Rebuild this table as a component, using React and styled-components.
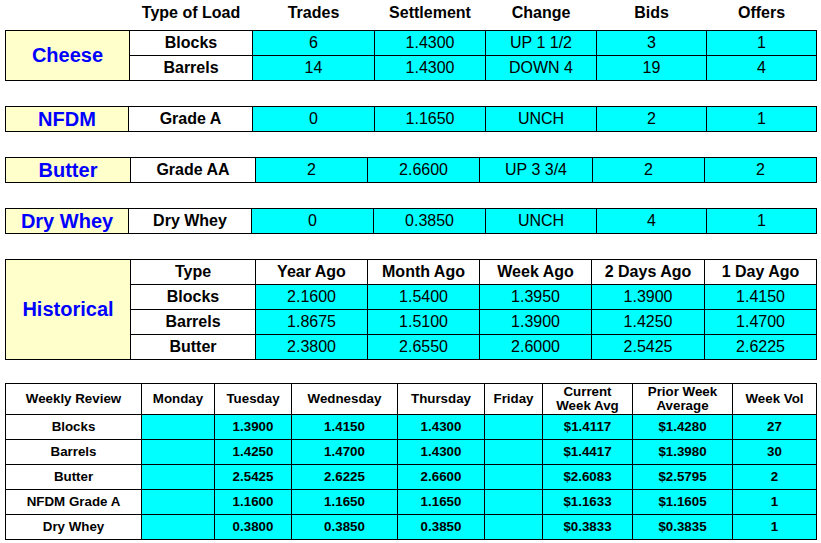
import React from "react";
import styled, { createGlobalStyle } from "styled-components";

const Global = createGlobalStyle`
  html, body { margin: 0; padding: 0; background: #fff; }
  body { font-family: "Liberation Sans", Arial, sans-serif; color: #000; }
`;

const Page = styled.div`
  padding: 0 5px;
  width: 812px;
`;

const Grid = styled.div`
  display: grid;
  grid-template-columns: ${(p) => p.$cols};
  grid-auto-rows: ${(p) => p.$rows || "24px"};
  gap: 1px;
  padding: 1px;
  background: #000;
  margin-top: ${(p) => p.$mt || 0}px;
`;

const HeadGrid = styled.div`
  display: grid;
  grid-template-columns: ${(p) => p.$cols};
  grid-auto-rows: 25px;
  gap: 1px;
  padding: 0 1px;
  margin-bottom: 5px;
`;

const Cell = styled.div`
  display: flex;
  align-items: center;
  justify-content: center;
  text-align: center;
  font-size: 16px;
  font-weight: ${(p) => (p.$bold ? 700 : 400)};
  background: ${(p) => (p.$cyan ? "#00ffff" : "#fff")};
  white-space: nowrap;
`;

const HeadCell = styled.div`
  display: flex;
  align-items: center;
  justify-content: center;
  font-size: 16px;
  font-weight: 700;
`;

const Label = styled.div`
  grid-row: span ${(p) => p.$span || 1};
  display: flex;
  align-items: center;
  justify-content: center;
  background: #ffffcc;
  color: #0000ff;
  font-size: 20px;
  font-weight: 700;
  white-space: nowrap;
`;

const WCell = styled.div`
  display: flex;
  align-items: center;
  justify-content: center;
  text-align: center;
  font-size: 13.33px;
  line-height: 14px;
  font-weight: 700;
  background: ${(p) => (p.$cyan ? "#00ffff" : "#fff")};
  white-space: nowrap;
`;

const cols = (arr) => arr.map((w) => `${w}px`).join(" ");

const CHEESE = cols([123, 122, 121, 110, 110, 109, 109]);
const NFDM = cols([122, 123, 121, 110, 110, 109, 109]);
const BUTTER = cols([124, 124, 111, 111, 112, 111, 111]);
const WHEY = cols([122, 122, 121, 111, 110, 109, 109]);
const HIST = cols([124, 124, 111, 111, 111, 112, 111]);
const WEEK = cols([135, 72, 76, 105, 86, 57, 89, 99, 83]);

function DataRow({ type, values }) {
  return (
    <>
      <Cell $bold>{type}</Cell>
      {values.map((v, i) => (
        <Cell key={i} $cyan>
          {v}
        </Cell>
      ))}
    </>
  );
}

const weekly = [
  ["Blocks", "", "1.3900", "1.4150", "1.4300", "", "$1.4117", "$1.4280", "27"],
  ["Barrels", "", "1.4250", "1.4700", "1.4300", "", "$1.4417", "$1.3980", "30"],
  ["Butter", "", "2.5425", "2.6225", "2.6600", "", "$2.6083", "$2.5795", "2"],
  ["NFDM Grade A", "", "1.1600", "1.1650", "1.1650", "", "$1.1633", "$1.1605", "1"],
  ["Dry Whey", "", "0.3800", "0.3850", "0.3850", "", "$0.3833", "$0.3835", "1"],
];

export default function App() {
  return (
    <Page>
      <Global />
      <HeadGrid $cols={CHEESE}>
        <HeadCell />
        <HeadCell>Type of Load</HeadCell>
        <HeadCell>Trades</HeadCell>
        <HeadCell>Settlement</HeadCell>
        <HeadCell>Change</HeadCell>
        <HeadCell>Bids</HeadCell>
        <HeadCell>Offers</HeadCell>
      </HeadGrid>

      <Grid $cols={CHEESE}>
        <Label $span={2}>Cheese</Label>
        <DataRow type="Blocks" values={["6", "1.4300", "UP 1 1/2", "3", "1"]} />
        <DataRow type="Barrels" values={["14", "1.4300", "DOWN 4", "19", "4"]} />
      </Grid>

      <Grid $cols={NFDM} $mt={25}>
        <Label>NFDM</Label>
        <DataRow type="Grade A" values={["0", "1.1650", "UNCH", "2", "1"]} />
      </Grid>

      <Grid $cols={BUTTER} $mt={25}>
        <Label>Butter</Label>
        <DataRow type="Grade AA" values={["2", "2.6600", "UP 3 3/4", "2", "2"]} />
      </Grid>

      <Grid $cols={WHEY} $mt={25}>
        <Label>Dry Whey</Label>
        <DataRow type="Dry Whey" values={["0", "0.3850", "UNCH", "4", "1"]} />
      </Grid>

      <Grid $cols={HIST} $mt={25}>
        <Label $span={4}>Historical</Label>
        <Cell $bold>Type</Cell>
        <Cell $bold>Year Ago</Cell>
        <Cell $bold>Month Ago</Cell>
        <Cell $bold>Week Ago</Cell>
        <Cell $bold>2 Days Ago</Cell>
        <Cell $bold>1 Day Ago</Cell>
        <DataRow type="Blocks" values={["2.1600", "1.5400", "1.3950", "1.3900", "1.4150"]} />
        <DataRow type="Barrels" values={["1.8675", "1.5100", "1.3900", "1.4250", "1.4700"]} />
        <DataRow type="Butter" values={["2.3800", "2.6550", "2.6000", "2.5425", "2.6225"]} />
      </Grid>

      <Grid $cols={WEEK} $rows="30px 24px 24px 24px 24px 24px" $mt={23}>
        <WCell>Weekly Review</WCell>
        <WCell>Monday</WCell>
        <WCell>Tuesday</WCell>
        <WCell>Wednesday</WCell>
        <WCell>Thursday</WCell>
        <WCell>Friday</WCell>
        <WCell>
          Current
          <br />
          Week Avg
        </WCell>
        <WCell>
          Prior Week
          <br />
          Average
        </WCell>
        <WCell>Week Vol</WCell>
        {weekly.map((row) =>
          row.map((v, i) => (
            <WCell key={row[0] + i} $cyan={i > 0}>
              {v}
            </WCell>
          ))
        )}
      </Grid>
    </Page>
  );
}
